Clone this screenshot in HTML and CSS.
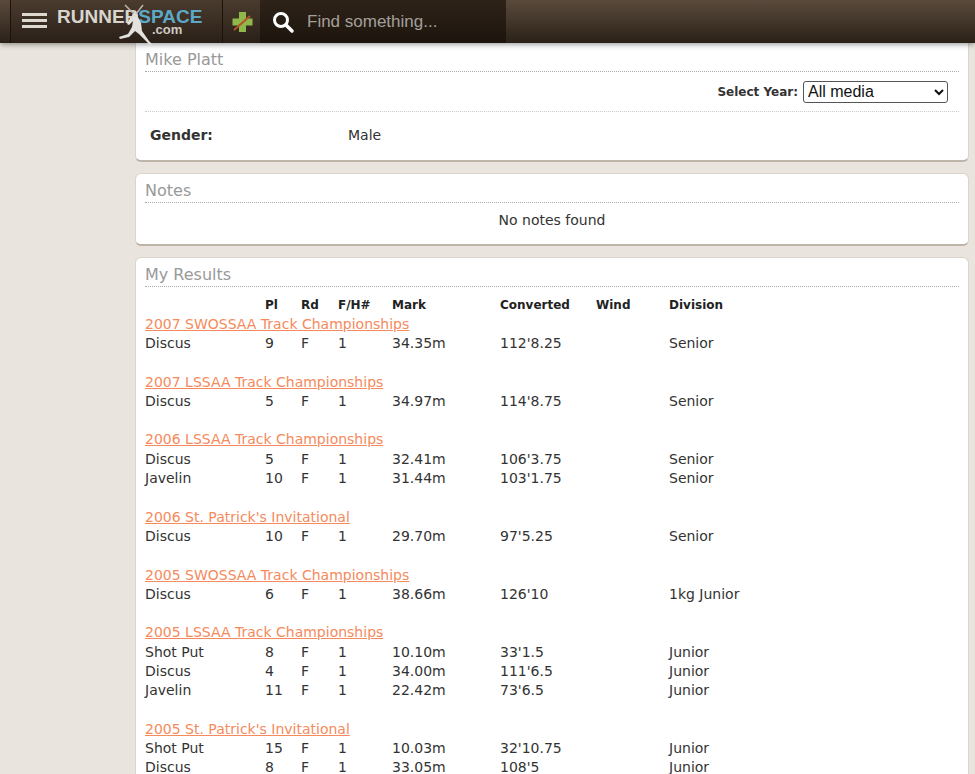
FILE: index.html
```html
<!DOCTYPE html>
<html lang="en">
<head>
    <meta charset="UTF-8">
    <title>Mike Platt - RunnerSpace</title>
    <link rel="stylesheet" href="styles.css">
</head>
<body>
    <header class="topbar">
        <div class="bar-left">
            <div class="menu-btn"><span></span><span></span><span></span></div>
            <a class="logo">
                <span class="logo-runner">RUNNER</span><span class="logo-space">SPACE</span>
                <span class="logo-com">.com</span>
                <svg class="logo-man" width="46" height="46" viewBox="0 0 46 46">
                    <path d="M13 3l9 9M31 3l-7 9" stroke="#b9b5ae" stroke-width="1.5" fill="none"/>
                    <circle cx="23" cy="14" r="3" fill="#ddd"/>
                    <path d="M18 16l8-1 3 6 1 8 7 10 3 3-2 1-11-11-4-3-6 6-9 2-1-2 9-3 4-7 1-6-4 4-2-1z" fill="#e4e2de"/>
                </svg>
            </a>
        </div>
        <div class="plus-cell">
            <svg width="22" height="22" viewBox="0 0 22 22">
                <path d="M8 1h7v6.500h6.500v7H15V21H8v-6.500H1.500v-7H8z" fill="#8fb84a"/>
                <path d="M3 19L19 5" stroke="#b5502c" stroke-width="2"/>
            </svg>
        </div>
        <div class="search-cell">
            <svg width="24" height="24" viewBox="0 0 24 24">
                <circle cx="10" cy="10" r="6.500" fill="none" stroke="#fff" stroke-width="3"/>
                <path d="M15 15l6 6" stroke="#fff" stroke-width="3.500" stroke-linecap="round"/>
            </svg>
            <span class="search-text">Find something...</span>
        </div>
    </header>

    <main class="content">
        <section class="card card-profile">
            <h2>Mike Platt</h2>
            <div class="year-row">
                <label>Select Year:</label>
                <select class="year-select"><option>All media</option></select>
            </div>
            <div class="gender-row">
                <strong>Gender:</strong>
                <span>Male</span>
            </div>
        </section>

        <section class="card card-notes">
            <h2>Notes</h2>
            <p class="no-notes">No notes found</p>
        </section>

        <section class="card card-results">
            <h2>My Results</h2>
            <table class="results">
                <thead>
                    <tr><th class="c-event"></th><th class="c-pl">Pl</th><th class="c-rd">Rd</th><th class="c-fh">F/H#</th><th class="c-mark">Mark</th><th class="c-conv">Converted</th><th class="c-wind">Wind</th><th class="c-div">Division</th></tr>
                </thead>
                <tbody>
                    <tr><td colspan="8"><a href="#">2007 SWOSSAA Track Championships</a></td></tr>
                    <tr><td>Discus</td><td>9</td><td>F</td><td>1</td><td>34.35m</td><td>112'8.25</td><td></td><td>Senior</td></tr>
                    <tr class="gap"><td colspan="8"></td></tr>
                    <tr><td colspan="8"><a href="#">2007 LSSAA Track Championships</a></td></tr>
                    <tr><td>Discus</td><td>5</td><td>F</td><td>1</td><td>34.97m</td><td>114'8.75</td><td></td><td>Senior</td></tr>
                    <tr class="gap"><td colspan="8"></td></tr>
                    <tr><td colspan="8"><a href="#">2006 LSSAA Track Championships</a></td></tr>
                    <tr><td>Discus</td><td>5</td><td>F</td><td>1</td><td>32.41m</td><td>106'3.75</td><td></td><td>Senior</td></tr>
                    <tr><td>Javelin</td><td>10</td><td>F</td><td>1</td><td>31.44m</td><td>103'1.75</td><td></td><td>Senior</td></tr>
                    <tr class="gap"><td colspan="8"></td></tr>
                    <tr><td colspan="8"><a href="#">2006 St. Patrick's Invitational</a></td></tr>
                    <tr><td>Discus</td><td>10</td><td>F</td><td>1</td><td>29.70m</td><td>97'5.25</td><td></td><td>Senior</td></tr>
                    <tr class="gap"><td colspan="8"></td></tr>
                    <tr><td colspan="8"><a href="#">2005 SWOSSAA Track Championships</a></td></tr>
                    <tr><td>Discus</td><td>6</td><td>F</td><td>1</td><td>38.66m</td><td>126'10</td><td></td><td>1kg Junior</td></tr>
                    <tr class="gap"><td colspan="8"></td></tr>
                    <tr><td colspan="8"><a href="#">2005 LSSAA Track Championships</a></td></tr>
                    <tr><td>Shot Put</td><td>8</td><td>F</td><td>1</td><td>10.10m</td><td>33'1.5</td><td></td><td>Junior</td></tr>
                    <tr><td>Discus</td><td>4</td><td>F</td><td>1</td><td>34.00m</td><td>111'6.5</td><td></td><td>Junior</td></tr>
                    <tr><td>Javelin</td><td>11</td><td>F</td><td>1</td><td>22.42m</td><td>73'6.5</td><td></td><td>Junior</td></tr>
                    <tr class="gap"><td colspan="8"></td></tr>
                    <tr><td colspan="8"><a href="#">2005 St. Patrick's Invitational</a></td></tr>
                    <tr><td>Shot Put</td><td>15</td><td>F</td><td>1</td><td>10.03m</td><td>32'10.75</td><td></td><td>Junior</td></tr>
                    <tr><td>Discus</td><td>8</td><td>F</td><td>1</td><td>33.05m</td><td>108'5</td><td></td><td>Junior</td></tr>
                </tbody>
            </table>
        </section>
    </main>
</body>
</html>
```

FILE: styles.css
```css
html {
    height: 100%;
    overflow: hidden;
}
body {
    margin: 0;
    height: 774px;
    overflow: hidden;
    background: #e9e5de;
    font-family: "DejaVu Sans", sans-serif;
    font-size: 14px;
    color: #333;
}
.topbar {
    position: relative;
    z-index: 2;
    display: flex;
    height: 43px;
    background: linear-gradient(#5a4a3c, #2b2118);
    box-shadow: 0 1px 6px rgba(0,0,0,0.45);
}
.bar-left {
    display: flex;
    align-items: center;
    width: 213px;
    margin-left: 10px;
    border-left: 1px solid #1a130c;
    border-right: 1px solid #1a130c;
    background: linear-gradient(#4a3b2e, #2a2018);
    box-sizing: border-box;
}
.menu-btn {
    margin-left: 11px;
    width: 25px;
}
.menu-btn span {
    display: block;
    height: 3px;
    margin-bottom: 3px;
    background: #ddd8d0;
}
.logo {
    position: relative;
    display: block;
    margin-left: 10px;
    height: 43px;
    line-height: 33px;
    font-family: "Liberation Sans", sans-serif;
    font-weight: bold;
    font-size: 19px;
    white-space: nowrap;
}
.logo-runner {
    color: #d8d5cf;
}
.logo-space {
    color: #5ba9c7;
}
.logo-com {
    position: absolute;
    left: 95px;
    top: 13px;
    font-size: 13px;
    color: #cfcac2;
}
.logo-man {
    position: absolute;
    left: 55px;
    top: 2px;
}
.plus-cell {
    display: flex;
    align-items: center;
    justify-content: center;
    width: 37px;
    background: linear-gradient(#4a3b2e, #2a2018);
    box-sizing: border-box;
}
.search-cell {
    display: flex;
    align-items: center;
    width: 246px;
    background: linear-gradient(#2e2319, #1c140d);
}
.search-cell svg {
    margin-left: 11px;
}
.search-text {
    margin-left: 12px;
    font-family: "Liberation Sans", sans-serif;
    font-size: 17px;
    color: #a5a09a;
}
.content {
    margin-left: 135px;
    margin-right: 6px;
}
.card {
    background: #fff;
    border: 1px solid #d9d4cc;
    border-bottom: 2px solid #bdb5aa;
    border-radius: 6px;
    padding: 0 9px;
    margin-bottom: 11px;
}
.card-profile {
    border-top: none;
    border-top-left-radius: 0;
    border-top-right-radius: 0;
    height: 117px;
}
.card-notes {
    height: 70px;
}
.card h2 {
    margin: 0;
    font-size: 16px;
    font-weight: normal;
    color: #999;
    line-height: 22px;
    padding-top: 6px;
    border-bottom: 1px dotted #aaa;
}
.year-row {
    display: flex;
    justify-content: flex-end;
    align-items: center;
    height: 39px;
    padding-right: 11px;
    border-bottom: 1px dotted #ccc;
    font-size: 12px;
    font-weight: bold;
}
.year-select {
    margin-left: 5px;
    width: 145px;
    height: 22px;
    font-family: "Liberation Sans", sans-serif;
    font-size: 16px;
    background: #fff;
    color: #111;
    border: 1px solid #555;
    border-radius: 3px;
}
.gender-row {
    display: flex;
    align-items: center;
    height: 46px;
    padding-left: 5px;
}
.gender-row strong {
    width: 198px;
}
.no-notes {
    margin: 0;
    text-align: center;
    line-height: 35px;
}
.card-results {
    margin-bottom: 0;
    height: 600px;
}
.results {
    width: 810px;
    border-collapse: collapse;
    table-layout: fixed;
    margin-top: 8px;
}
.results th {
    font-size: 12px;
    text-align: left;
    padding: 0;
    height: 19px;
    color: #222;
}
.results td {
    padding: 0;
    height: 19.300px;
    white-space: nowrap;
}
.results a {
    color: #f58a5c;
}
.c-event { width: 120px; }
.c-pl { width: 36px; }
.c-rd { width: 37px; }
.c-fh { width: 54px; }
.c-mark { width: 108px; }
.c-conv { width: 96px; }
.c-wind { width: 73px; }
```
